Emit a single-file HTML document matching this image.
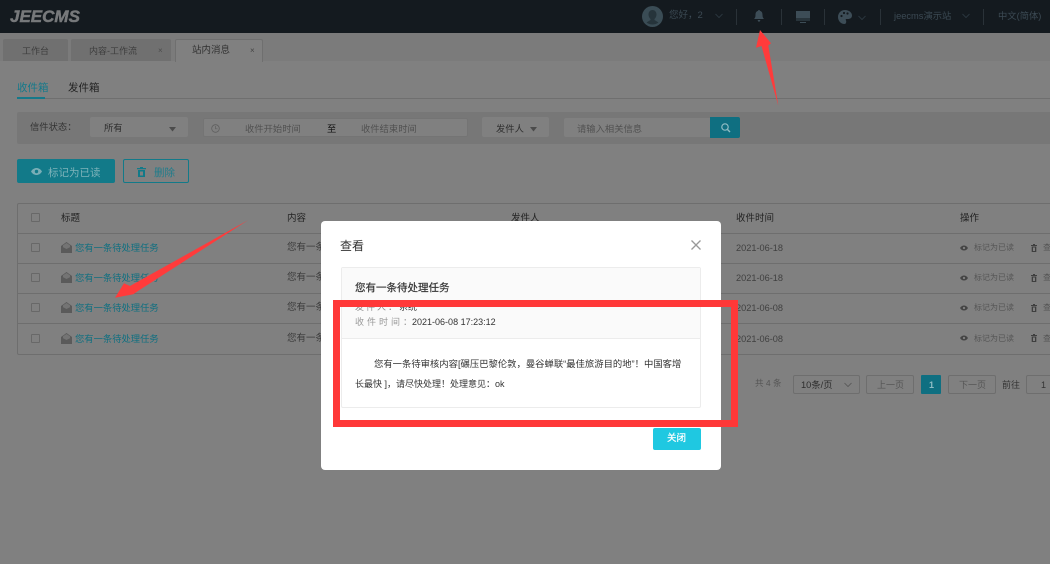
<!DOCTYPE html>
<html lang="zh">
<head>
<meta charset="utf-8">
<title>JEECMS</title>
<style>
html,body{margin:0;padding:0}
body{width:1050px;height:564px;overflow:hidden;position:relative;background:#808080;font-family:"Liberation Sans","Noto Sans CJK SC",sans-serif;font-size:9.5px;color:#3a3a3a}
.a,.t{position:absolute}
.t{white-space:nowrap;line-height:14px}
.box{position:absolute;box-sizing:border-box}
.cb{position:absolute;left:31px;width:9px;height:9px;border:1px solid #686868;box-sizing:border-box;border-radius:1px}
.line{position:absolute;left:17px;right:0;height:1px;background:#6e6e6e}
.sep{position:absolute;top:9px;width:1px;height:16px;background:#2a3238}
.h{color:#3c4a54;font-size:9.5px}
.link{color:#0f6f80;font-size:9.3px;left:75px}
.op{color:#555;font-size:8px}
svg{position:absolute;overflow:visible}
</style>
</head>
<body>
<!-- header -->
<div class="box" style="left:0;top:0;width:1050px;height:33px;background:#141a1f"></div>
<div class="t" style="left:10px;top:8px;font:italic bold 17px/17px 'Liberation Sans',sans-serif;color:#77797b;-webkit-text-stroke:.5px #77797b">JEECMS</div>
<svg style="left:642px;top:6px" width="21" height="21" viewBox="0 0 21 21"><circle cx="10.5" cy="10.5" r="10.5" fill="#3a4c55"/><path d="M10.5 4c2.5 0 4 2 4 4.500 0 2-1 3.500-2 4.500v1l4 2.500a10 10 0 0 1-12 0l4-2.500v-1c-1-1-2-2.500-2-4.500C6.500 6 8 4 10.500 4z" fill="#26343b"/></svg>
<div class="t h" style="left:669px;top:9px">您好，2</div>
<svg style="left:715px;top:13px" width="8" height="6"><path d="M.5 1l3.500 3.500L7.500 1" fill="none" stroke="#2f3c45" stroke-width=".8"/></svg>
<div class="sep" style="left:736px"></div>
<svg style="left:754px;top:10px" width="10" height="12" viewBox="0 0 10 12"><path d="M5 0c.6 0 1 .4 1 .9C8 1.500 8.500 3 8.500 5c0 2 .5 3 1.500 4H0c1-1 1.500-2 1.500-4 0-2 .5-3.500 2.500-4.100C4 .4 4.400 0 5 0zM3.700 10h2.600c0 1-.6 1.700-1.300 1.700S3.700 11 3.700 10z" fill="#3d4d57"/></svg>
<div class="sep" style="left:781px"></div>
<svg style="left:796px;top:11px" width="14" height="12" viewBox="0 0 14 12"><path d="M0 0h14v7.500H0zM0 8.500h14V9.500H0zM4 11h6v1H4z" fill="#3d4d57"/></svg>
<div class="sep" style="left:824px"></div>
<svg style="left:838px;top:10px" width="14" height="14" viewBox="0 0 14 14"><path d="M7 0c4 0 7 2.500 7 5.500 0 2.500-2 3.500-4 3.500H8.500C7.500 9 7.500 10 8 10.500c.5.800.3 3.500-1.500 3.500C3 14 0 11 0 7s3-7 7-7z" fill="#3d4d57"/><circle cx="3.500" cy="6" r="1.100" fill="#141a1f"/><circle cx="6" cy="3" r="1.100" fill="#141a1f"/><circle cx="9.500" cy="3.500" r="1.100" fill="#141a1f"/></svg>
<svg style="left:858px;top:15px" width="8" height="6"><path d="M.5 1l3.500 3.500L7.500 1" fill="none" stroke="#2f3c45" stroke-width=".8"/></svg>
<div class="sep" style="left:880px"></div>
<div class="t h" style="left:894px;top:9px;font-size:9.300px">jeecms演示站</div>
<svg style="left:962px;top:13px" width="8" height="6"><path d="M.5 1l3.500 3.500L7.500 1" fill="none" stroke="#2f3c45" stroke-width=".8"/></svg>
<div class="sep" style="left:983px"></div>
<div class="t h" style="left:998px;top:9px;font-size:9.300px">中文(简体)</div>

<!-- tabs -->
<div class="box" style="left:0;top:33px;width:1050px;height:28px;background:#7b7b7b"></div>
<div class="box" style="left:3px;top:39px;width:65px;height:22px;background:#707070;border-radius:2px 2px 0 0"></div>
<div class="t" style="left:22px;top:44px;color:#3e3e3e;font-size:9px">工作台</div>
<div class="box" style="left:71px;top:39px;width:100px;height:22px;background:#707070;border-radius:2px 2px 0 0"></div>
<div class="t" style="left:89px;top:44px;color:#3e3e3e;font-size:9px">内容-工作流</div>
<div class="t" style="left:158px;top:44px;color:#4d4d4d;font-size:8px">×</div>
<div class="box" style="left:175px;top:39px;width:88px;height:23px;background:#808080;border:1px solid #6f6f6f;border-bottom:0;border-radius:2px 2px 0 0"></div>
<div class="t" style="left:192px;top:44px;color:#303030;font-size:9.500px">站内消息</div>
<div class="t" style="left:250px;top:44px;color:#444;font-size:8px">×</div>

<!-- sub tabs -->
<div class="t" style="left:17px;top:81px;color:#15798a;font-size:10.500px">收件箱</div>
<div class="t" style="left:68px;top:81px;color:#222;font-size:10.500px">发件箱</div>
<div class="line" style="top:98px;background:#6f6f6f"></div>
<div class="box" style="left:17px;top:97px;width:28px;height:2px;background:#15798a"></div>

<!-- filter -->
<div class="box" style="left:17px;top:112px;width:1033px;height:32px;background:#777;border-radius:2px 0 0 2px"></div>
<div class="t" style="left:30px;top:120px;font-size:9.300px;color:#333">信件状态：</div>
<div class="box" style="left:90px;top:117px;width:98px;height:20px;background:#808080;border-radius:2px"></div>
<div class="t" style="left:104px;top:121px;font-size:9.300px;color:#2d2d2d">所有</div>
<svg style="left:169px;top:127px" width="8" height="5"><path d="M0 0h7L3.500 4.500z" fill="#4b4b4b"/></svg>
<div class="box" style="left:203px;top:118px;width:265px;height:19px;background:#808080;border-radius:2px;border:1px solid #747474"></div>
<svg style="left:211px;top:124px" width="9" height="9" viewBox="0 0 9 9"><circle cx="4.500" cy="4.500" r="3.800" fill="none" stroke="#5f5f5f" stroke-width=".8"/><path d="M4.500 2v2.800h2" fill="none" stroke="#5f5f5f" stroke-width=".7"/></svg>
<div class="t" style="left:245px;top:122px;font-size:9.300px;color:#515151">收件开始时间</div>
<div class="t" style="left:327px;top:122px;font-size:9.300px;color:#111">至</div>
<div class="t" style="left:361px;top:122px;font-size:9.300px;color:#515151">收件结束时间</div>
<div class="box" style="left:482px;top:117px;width:67px;height:20px;background:#808080;border-radius:2px"></div>
<div class="t" style="left:496px;top:122px;font-size:9.300px;color:#2d2d2d">发件人</div>
<svg style="left:530px;top:127px" width="8" height="5"><path d="M0 0h7L3.500 4.500z" fill="#4b4b4b"/></svg>
<div class="box" style="left:564px;top:118px;width:147px;height:19px;background:#808080;border-radius:2px 0 0 2px"></div>
<div class="t" style="left:577px;top:122px;font-size:9.300px;color:#515151">请输入相关信息</div>
<div class="box" style="left:710px;top:117px;width:30px;height:21px;background:#0f6f81;border-radius:0 2px 2px 0"></div>
<svg style="left:721px;top:123px" width="10" height="10" viewBox="0 0 10 10"><circle cx="4" cy="4" r="3.200" fill="none" stroke="#8fbcc4" stroke-width="1.200"/><path d="M6.500 6.500L9 9" stroke="#8fbcc4" stroke-width="1.400"/></svg>

<!-- action buttons -->
<div class="box" style="left:17px;top:159px;width:98px;height:24px;background:#127a89;border-radius:2px"></div>
<svg style="left:31px;top:168px" width="11" height="7" viewBox="0 0 11 7"><path d="M0 3.500C1.500 1 3.500 0 5.500 0s4 1 5.500 3.500C9.500 6 7.500 7 5.500 7S1.500 6 0 3.500z" fill="#79aeb6"/><circle cx="5.500" cy="3.500" r="1.700" fill="#127a89"/></svg>
<div class="t" style="left:48px;top:166px;font-size:10.500px;color:#7fb3ba">标记为已读</div>
<div class="box" style="left:123px;top:159px;width:66px;height:24px;border:1px solid #127a89;border-radius:2px"></div>
<svg style="left:137px;top:167px" width="9" height="10" viewBox="0 0 9 10"><path d="M3 0h3v1h3v1.200H0V1h3zM1 3h7v7H1z" fill="#127a89"/><path d="M3 4.500h3v4H3z" fill="#808080"/></svg>
<div class="t" style="left:154px;top:166px;font-size:10.500px;color:#1f7c8b">删除</div>

<!-- table -->
<div class="box" style="left:17px;top:203px;width:1040px;height:152px;border:1px solid #6e6e6e;border-radius:2px"></div>
<div class="line" style="top:233px"></div>
<div class="line" style="top:263px"></div>
<div class="line" style="top:293px"></div>
<div class="line" style="top:323px"></div>
<div class="cb" style="top:213px"></div>
<div class="cb" style="top:243px"></div>
<div class="cb" style="top:273px"></div>
<div class="cb" style="top:303px"></div>
<div class="cb" style="top:334px"></div>
<div class="t" style="left:61px;top:212px;color:#222">标题</div>
<div class="t" style="left:287px;top:212px;color:#222">内容</div>
<div class="t" style="left:511px;top:212px;color:#222">发件人</div>
<div class="t" style="left:736px;top:212px;color:#222">收件时间</div>
<div class="t" style="left:960px;top:212px;color:#222">操作</div>

<svg style="left:61px;top:242px" width="11" height="11" viewBox="0 0 11 11"><path d="M5.500 0L11 4v7H0V4z" fill="#5a5a5a"/><path d="M2 3.200L5.500 1 9 3.200v2L5.500 7 2 5.200z" fill="#747474"/></svg>
<svg style="left:61px;top:272px" width="11" height="11" viewBox="0 0 11 11"><path d="M5.500 0L11 4v7H0V4z" fill="#5a5a5a"/><path d="M2 3.200L5.500 1 9 3.200v2L5.500 7 2 5.200z" fill="#747474"/></svg>
<svg style="left:61px;top:302px" width="11" height="11" viewBox="0 0 11 11"><path d="M5.500 0L11 4v7H0V4z" fill="#5a5a5a"/><path d="M2 3.200L5.500 1 9 3.200v2L5.500 7 2 5.200z" fill="#747474"/></svg>
<svg style="left:61px;top:333px" width="11" height="11" viewBox="0 0 11 11"><path d="M5.500 0L11 4v7H0V4z" fill="#5a5a5a"/><path d="M2 3.200L5.500 1 9 3.200v2L5.500 7 2 5.200z" fill="#747474"/></svg>

<div class="t link" style="top:241px">您有一条待处理任务</div>
<div class="t link" style="top:271px">您有一条待处理任务</div>
<div class="t link" style="top:301px">您有一条待处理任务</div>
<div class="t link" style="top:332px">您有一条待处理任务</div>
<div class="t" style="left:287px;top:241px">您有一条待处理任务</div>
<div class="t" style="left:287px;top:271px">您有一条待处理任务</div>
<div class="t" style="left:287px;top:301px">您有一条待处理任务</div>
<div class="t" style="left:287px;top:332px">您有一条待处理任务</div>
<div class="t" style="left:736px;top:241px;color:#404040;font-size:9.200px">2021-06-18</div>
<div class="t" style="left:736px;top:271px;color:#404040;font-size:9.200px">2021-06-18</div>
<div class="t" style="left:736px;top:301px;color:#404040;font-size:9.200px">2021-06-08</div>
<div class="t" style="left:736px;top:332px;color:#404040;font-size:9.200px">2021-06-08</div>

<svg style="left:960px;top:245px" width="8" height="6" viewBox="0 0 11 7"><path d="M0 3.500C1.500 1 3.500 0 5.500 0s4 1 5.500 3.500C9.500 6 7.500 7 5.500 7S1.500 6 0 3.500z" fill="#444"/><circle cx="5.500" cy="3.500" r="1.600" fill="#808080"/></svg>
<svg style="left:960px;top:275px" width="8" height="6" viewBox="0 0 11 7"><path d="M0 3.500C1.500 1 3.500 0 5.500 0s4 1 5.500 3.500C9.500 6 7.500 7 5.500 7S1.500 6 0 3.500z" fill="#444"/><circle cx="5.500" cy="3.500" r="1.600" fill="#808080"/></svg>
<svg style="left:960px;top:305px" width="8" height="6" viewBox="0 0 11 7"><path d="M0 3.500C1.500 1 3.500 0 5.500 0s4 1 5.500 3.500C9.500 6 7.500 7 5.500 7S1.500 6 0 3.500z" fill="#444"/><circle cx="5.500" cy="3.500" r="1.600" fill="#808080"/></svg>
<svg style="left:960px;top:335px" width="8" height="6" viewBox="0 0 11 7"><path d="M0 3.500C1.500 1 3.500 0 5.500 0s4 1 5.500 3.500C9.500 6 7.500 7 5.500 7S1.500 6 0 3.500z" fill="#444"/><circle cx="5.500" cy="3.500" r="1.600" fill="#808080"/></svg>
<div class="t op" style="left:974px;top:241px">标记为已读</div>
<div class="t op" style="left:974px;top:271px">标记为已读</div>
<div class="t op" style="left:974px;top:301px">标记为已读</div>
<div class="t op" style="left:974px;top:332px">标记为已读</div>
<svg style="left:1031px;top:244px" width="6" height="8" viewBox="0 0 6 8"><path d="M2 0h2v1h2v1H0V1h2zM.7 2.500h4.600V8H.7z" fill="#3f3f3f"/><path d="M2 3.500h2V7H2z" fill="#808080"/></svg>
<svg style="left:1031px;top:274px" width="6" height="8" viewBox="0 0 6 8"><path d="M2 0h2v1h2v1H0V1h2zM.7 2.500h4.600V8H.7z" fill="#3f3f3f"/><path d="M2 3.500h2V7H2z" fill="#808080"/></svg>
<svg style="left:1031px;top:304px" width="6" height="8" viewBox="0 0 6 8"><path d="M2 0h2v1h2v1H0V1h2zM.7 2.500h4.600V8H.7z" fill="#3f3f3f"/><path d="M2 3.500h2V7H2z" fill="#808080"/></svg>
<svg style="left:1031px;top:334px" width="6" height="8" viewBox="0 0 6 8"><path d="M2 0h2v1h2v1H0V1h2zM.7 2.500h4.600V8H.7z" fill="#3f3f3f"/><path d="M2 3.500h2V7H2z" fill="#808080"/></svg>
<div class="t op" style="left:1043px;top:241px">查看</div>
<div class="t op" style="left:1043px;top:271px">查看</div>
<div class="t op" style="left:1043px;top:301px">查看</div>
<div class="t op" style="left:1043px;top:332px">查看</div>

<!-- pagination -->
<div class="t" style="left:755px;top:376px;font-size:8.500px;color:#555">共 4 条</div>
<div class="box" style="left:793px;top:375px;width:67px;height:19px;border:1px solid #6e6e6e;border-radius:2px"></div>
<div class="t" style="left:801px;top:378px;font-size:9.300px;color:#2d2d2d">10条/页</div>
<svg style="left:844px;top:382px" width="8" height="6"><path d="M.5 1l3.500 3.500L7.500 1" fill="none" stroke="#555" stroke-width=".8"/></svg>
<div class="box" style="left:866px;top:375px;width:48px;height:19px;border:1px solid #6e6e6e;border-radius:2px"></div>
<div class="t" style="left:877px;top:378px;font-size:9px;color:#555">上一页</div>
<div class="box" style="left:921px;top:375px;width:20px;height:19px;background:#0f6f81;border-radius:1px"></div>
<div class="t" style="left:929px;top:378px;font:bold 9px/14px 'Liberation Sans',sans-serif;color:#8fbcc4">1</div>
<div class="box" style="left:948px;top:375px;width:48px;height:19px;border:1px solid #6e6e6e;border-radius:2px"></div>
<div class="t" style="left:959px;top:378px;font-size:9px;color:#555">下一页</div>
<div class="t" style="left:1002px;top:378px;font-size:9px;color:#333">前往</div>
<div class="box" style="left:1026px;top:375px;width:40px;height:19px;border:1px solid #6e6e6e;border-radius:2px"></div>
<div class="t" style="left:1041px;top:378px;font-size:9px;color:#333">1</div>

<!-- red arrows -->
<svg style="left:0;top:0" width="1050" height="564"><path d="M760 30L771 43.300L768.300 45.500L778.300 105.700L761.500 46L756 47.700z" fill="#ff3b3b"/><path d="M248.300 220L130 286L124 283.300L115 297.700L133.300 294.300L138 291z" fill="#ff3b3b"/></svg>

<!-- modal -->
<div class="box" style="left:321px;top:221px;width:400px;height:249px;background:#fff;border-radius:4px"></div>
<div class="t" style="left:340px;top:239px;font-size:12px;color:#333">查看</div>
<svg style="left:691px;top:240px" width="10" height="10"><path d="M.5.500l9 9M9.500.500l-9 9" stroke="#999" stroke-width="1.300"/></svg>
<div class="box" style="left:341px;top:267px;width:360px;height:141px;border:1px solid #ececec;border-radius:2px;background:#fff"></div>
<div class="box" style="left:342px;top:268px;width:358px;height:71px;background:#fafafa;border-bottom:1px solid #ececec"></div>
<div class="t" style="left:355px;top:281px;font-size:10.500px;color:#333;-webkit-text-stroke:.2px #333">您有一条待处理任务</div>
<div class="t" style="left:355px;top:300px;font-size:9px;color:#888;letter-spacing:2px">发件人：<span style="color:#333;letter-spacing:0">系统</span></div>
<div class="t" style="left:355px;top:315px;font-size:9px;color:#999;letter-spacing:3px">收件时间<span style="letter-spacing:0">：</span><span style="color:#333;letter-spacing:0">2021-06-08 17:23:12</span></div>
<div class="t" style="left:374px;top:357px;font-size:9.330px;color:#333">您有一条待审核内容[碾压巴黎伦敦，曼谷蝉联“最佳旅游目的地”！中国客增</div>
<div class="t" style="left:355px;top:377px;font-size:9px;color:#333">长最快 ]，请尽快处理！处理意见：ok</div>
<div class="box" style="left:653px;top:428px;width:48px;height:22px;background:#1fc8e1;border-radius:2px"></div>
<div class="t" style="left:667px;top:432px;font-size:9.500px;color:#fff;-webkit-text-stroke:.2px #fff">关闭</div>

<!-- red rectangle -->
<div class="box" style="left:333px;top:300px;width:405px;height:127px;border:7px solid #ff3838"></div>
</body>
</html>
